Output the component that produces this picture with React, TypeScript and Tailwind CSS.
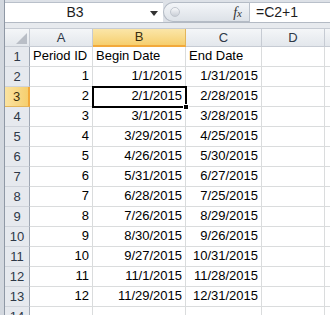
import React from "react";

const rows = [
  ["1", "1/1/2015", "1/31/2015"],
  ["2", "2/1/2015", "2/28/2015"],
  ["3", "3/1/2015", "3/28/2015"],
  ["4", "3/29/2015", "4/25/2015"],
  ["5", "4/26/2015", "5/30/2015"],
  ["6", "5/31/2015", "6/27/2015"],
  ["7", "6/28/2015", "7/25/2015"],
  ["8", "7/26/2015", "8/29/2015"],
  ["9", "8/30/2015", "9/26/2015"],
  ["10", "9/27/2015", "10/31/2015"],
  ["11", "11/1/2015", "11/28/2015"],
  ["12", "11/29/2015", "12/31/2015"],
];

const cols = [
  { key: "A", w: "w-[63px]" },
  { key: "B", w: "w-[93px]" },
  { key: "C", w: "w-[76px]" },
  { key: "D", w: "w-[63px]" },
];

function ColHeader({ label, w, active }: { label: string; w: string; active?: boolean }) {
  return (
    <div
      className={`${w} shrink-0 h-full flex items-center justify-center border-r ${
        active
          ? "bg-gradient-to-b from-[#fbe6a8] to-[#f6cf6e] border-[#e3b55a] border-b-2 border-b-[#f2a93b] text-[#3b2f10]"
          : "bg-gradient-to-b from-[#f4f6f8] to-[#e3e7ec] border-[#c6cbd3] border-b border-b-[#c6cbd3] text-[#2e3847]"
      }`}
    >
      {label}
    </div>
  );
}

function RowHeader({ n, active }: { n: number; active?: boolean }) {
  return (
    <div
      className={`w-[25px] shrink-0 h-full flex items-center justify-center border-b ${
        active
          ? "bg-gradient-to-r from-[#fbe3a0] to-[#f6cf6e] border-[#e3b55a] border-r-2 border-r-[#f2a93b] text-[#3b2f10]"
          : "bg-[#e6e9ee] border-[#cfd3da] border-r border-r-[#9fa7b3] text-[#2e3847]"
      }`}
    >
      {n}
    </div>
  );
}

export default function App() {
  return (
    <div
      className="w-[330px] h-[315px] overflow-hidden flex bg-[#dde1e7] text-[13px] text-black"
      style={{ fontFamily: '"Liberation Sans", Arial, sans-serif' }}
    >
      <div className="w-[5px] shrink-0 bg-[#d3d8df] border-r border-[#8f98a5]" />
      <div className="flex-1 flex flex-col min-w-0">
        {/* formula bar */}
        <div className="h-[22px] shrink-0 pt-[2px] flex bg-[#dde1e7]">
          <div className="w-[158px] shrink-0 bg-white border-t border-[#b9c0ca] flex items-center relative">
            <div className="w-[140px] text-center text-[14px] text-[#1d1d1d]">B3</div>
            <svg className="absolute left-[145px] top-[8px]" width="8" height="5" viewBox="0 0 8 5">
              <path d="M0 0 L8 0 L4 5 Z" fill="#333" />
            </svg>
          </div>
          <div className="w-[86px] shrink-0 relative bg-gradient-to-b from-[#f3f5f8] to-[#dde2e8] rounded-l-[11px] border border-r-0 border-[#b4bbc5] flex items-center">
            <div className="absolute left-[6px] top-[4px] w-[10px] h-[10px] rounded-full bg-gradient-to-b from-[#f8f9fb] to-[#c9ced6] border border-[#c1c6ce]" />
            <span
              className="ml-auto mr-[7px] text-[14px] italic text-[#333]"
              style={{ fontFamily: '"Liberation Serif", "Times New Roman", serif' }}
            >
              f<span className="text-[11px]">x</span>
            </span>
          </div>
          <div className="flex-1 bg-white border-t border-l border-[#b9c0ca] flex items-center pl-[6px] text-[14px] text-[#1d1d1d]">
            =C2+1
          </div>
        </div>
        <div className="h-[6px] shrink-0 border-t border-[#b3bac4] bg-[#e7eaee]" />

        {/* grid */}
        <div className="flex-1 relative bg-white">
          <div className="h-[19px] flex border-t border-[#c6cbd3]">
            <div className="w-[25px] shrink-0 h-full relative bg-gradient-to-b from-[#f4f6f8] to-[#e3e7ec] border-r border-b border-[#c6cbd3]">
              <svg className="absolute right-[2px] bottom-[2px]" width="11" height="11" viewBox="0 0 11 11">
                <path d="M11 0 L11 11 L0 11 Z" fill="#b9bec6" />
              </svg>
            </div>
            {cols.map((c) => (
              <ColHeader key={c.key} label={c.key} w={c.w} active={c.key === "B"} />
            ))}
            <div className="flex-1 h-full bg-gradient-to-b from-[#f4f6f8] to-[#e3e7ec] border-b border-[#c6cbd3]" />
          </div>

          <div className="h-[20px] flex">
            <RowHeader n={1} />
            <div className="w-[63px] shrink-0 border-r border-b border-[#dadcdd] flex items-end pb-[1px] pl-[3px]">Period ID</div>
            <div className="w-[93px] shrink-0 border-r border-b border-[#dadcdd] flex items-end pb-[1px] pl-[3px]">Begin Date</div>
            <div className="w-[76px] shrink-0 border-r border-b border-[#dadcdd] flex items-end pb-[1px] pl-[3px]">End Date</div>
            <div className="w-[63px] shrink-0 border-r border-b border-[#dadcdd]" />
            <div className="flex-1 border-b border-[#dadcdd]" />
          </div>

          {rows.map((r, i) => (
            <div key={i} className="h-[20px] flex">
              <RowHeader n={i + 2} active={i + 2 === 3} />
              <div className="w-[63px] shrink-0 border-r border-b border-[#dadcdd] flex items-end justify-end pb-[1px] pr-[3px]">{r[0]}</div>
              <div className="w-[93px] shrink-0 border-r border-b border-[#dadcdd] flex items-end justify-end pb-[1px] pr-[3px]">{r[1]}</div>
              <div className="w-[76px] shrink-0 border-r border-b border-[#dadcdd] flex items-end justify-end pb-[1px] pr-[3px]">{r[2]}</div>
              <div className="w-[63px] shrink-0 border-r border-b border-[#dadcdd]" />
              <div className="flex-1 border-b border-[#dadcdd]" />
            </div>
          ))}

          <div className="h-[20px] flex">
            <RowHeader n={14} />
            <div className="w-[63px] shrink-0 border-r border-b border-[#dadcdd]" />
            <div className="w-[93px] shrink-0 border-r border-b border-[#dadcdd]" />
            <div className="w-[76px] shrink-0 border-r border-b border-[#dadcdd]" />
            <div className="w-[63px] shrink-0 border-r border-b border-[#dadcdd]" />
            <div className="flex-1 border-b border-[#dadcdd]" />
          </div>

          {/* active cell B3 */}
          <div className="absolute left-[87px] top-[58px] w-[95px] h-[22px] border-2 border-black pointer-events-none" />
          <div className="absolute left-[178px] top-[76px] w-[6px] h-[6px] bg-black border border-white" />
        </div>
      </div>
    </div>
  );
}
